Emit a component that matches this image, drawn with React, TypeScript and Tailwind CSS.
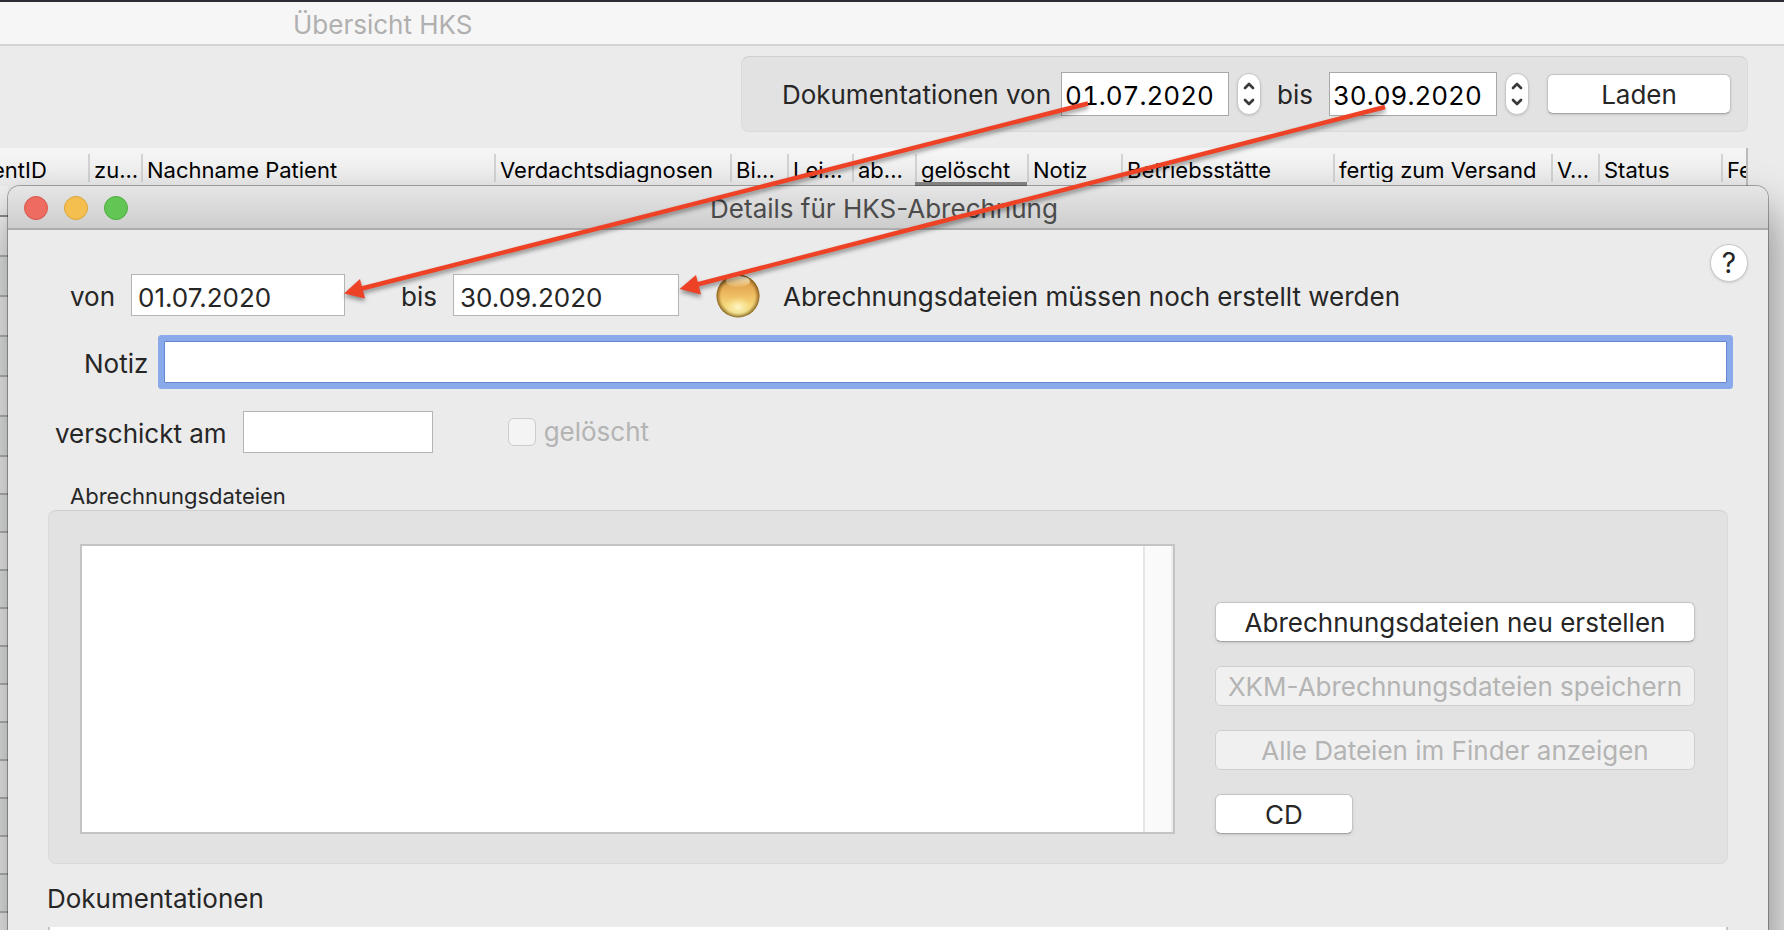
import { ReactNode } from 'react';
import { ChevronDown, ChevronUp } from 'lucide-react';

const columns = [
  { label: 'entID', width: 'w-[88px]' },
  { label: 'zu...', width: 'w-[53px]' },
  { label: 'Nachname Patient', width: 'w-[353px]' },
  { label: 'Verdachtsdiagnosen', width: 'w-[236px]' },
  { label: 'Bi...', width: 'w-[57px]' },
  { label: 'Lei...', width: 'w-[65px]' },
  { label: 'ab...', width: 'w-[63px]' },
  { label: 'gelöscht', width: 'w-[112px]', sorted: true },
  { label: 'Notiz', width: 'w-[94px]' },
  { label: 'Betriebsstätte', width: 'w-[212px]' },
  { label: 'fertig zum Versand', width: 'w-[218px]' },
  { label: 'V...', width: 'w-[47px]' },
  { label: 'Status', width: 'w-[123px]' },
  { label: 'Fe', width: '' },
];

const Stepper = ({ label }: { label: string }) => (
  <div className="flex flex-col w-6 h-[42px] rounded-full bg-white border border-[#c6c6c6] shadow-sm text-[#3a3a3a]">
    <button aria-label={`${label} erhöhen`} className="flex flex-1 items-end justify-center">
      <ChevronUp size={16} strokeWidth={4} />
    </button>
    <button aria-label={`${label} verringern`} className="flex flex-1 items-start justify-center">
      <ChevronDown size={16} strokeWidth={4} />
    </button>
  </div>
);

const PushButton = ({ children, className = '', disabled = false }: {
  children: ReactNode;
  className?: string;
  disabled?: boolean;
}) => (
  <button
    disabled={disabled}
    className={`h-10 pt-[2px] rounded-md border text-[26px] leading-8 whitespace-nowrap ${
      disabled
        ? 'bg-[#f0f0f0] border-[#cfcfcf] text-[#b4b4b4]'
        : 'bg-white border-[#c4c4c4] border-b-[#a6a6a6] text-[#262626] shadow-sm'
    } ${className}`}
  >
    {children}
  </button>
);

const Toolbar = () => (
  <div className="flex justify-end pt-[10px] pr-9 pb-4">
    <div className="flex items-center h-[76px] pl-10 pr-4 rounded-lg border border-[#dadada] border-t-[#cfcfcf] bg-[#e2e2e2]">
      <label htmlFor="filter-von" className="pt-[2px] text-[#262626]">Dokumentationen von</label>
      <input
        id="filter-von"
        defaultValue="01.07.2020"
        className="ml-[10px] mr-2 w-[168px] h-11 px-[3px] pt-[2px] bg-white border border-[#a8a8a8] text-black tabular-nums"
      />
      <Stepper label="von" />
      <label htmlFor="filter-bis" className="mx-4 pt-[2px] text-[#262626]">bis</label>
      <input
        id="filter-bis"
        defaultValue="30.09.2020"
        className="mr-2 w-[168px] h-11 px-[3px] pt-[2px] bg-white border border-[#a8a8a8] text-black tabular-nums"
      />
      <Stepper label="bis" />
      <PushButton className="ml-[18px] w-[184px]">Laden</PushButton>
    </div>
  </div>
);

const TableHeader = () => (
  <div className="mr-9 overflow-hidden border-r-2 border-[#bcbcbc] bg-linear-to-b from-[#f6f6f6] to-[#ebebeb]">
    <table className="w-full table-fixed border-collapse text-[22px] leading-8 text-black">
      <thead>
        <tr>
          {columns.map((column, index) => (
            <th
              key={column.label}
              className={`p-0 pt-[6px] text-left font-normal ${column.width}`}
            >
              <div className={`h-7 overflow-hidden whitespace-nowrap ${index > 0 ? 'border-l-2 border-[#d2d2d2] pl-1' : '-ml-2'}`}>
                {column.label}
              </div>
              <div className={`h-1 ${column.sorted ? 'bg-[#878787]' : ''}`} />
            </th>
          ))}
        </tr>
      </thead>
    </table>
  </div>
);

// Rows of the list that stay visible beside the dialog
const BackgroundRows = () => (
  <div className="flex w-2 flex-col bg-[#f2f2f2]">
    <div className="h-[31px] border-b-2 border-[#8f8f8f]" />
    {Array.from({ length: 6 }, (_, i) => (
      <div key={i} className="h-10 border-b-2 border-[#bdbdbd] even:bg-[#fbfbfb] odd:bg-[#f0f2f2]" />
    ))}
    {Array.from({ length: 12 }, (_, i) => (
      <div key={i} className="h-[38px] border-b-2 border-[#bdbdbd] even:bg-[#fbfbfb] odd:bg-[#f0f2f2]" />
    ))}
    <div className="flex-1 bg-[#fbfbfb]" />
  </div>
);

const StatusLight = () => (
  <svg width="46" height="46" viewBox="0 0 46 46" aria-hidden="true">
    <defs>
      <linearGradient id="light-body" x1="0" y1="0" x2="0" y2="1">
        <stop offset="0" stopColor="#6b4a12" />
        <stop offset="0.12" stopColor="#d69a45" />
        <stop offset="0.4" stopColor="#ecb45c" />
        <stop offset="0.7" stopColor="#f4d577" />
        <stop offset="1" stopColor="#e4da88" />
      </linearGradient>
      <radialGradient id="light-rim">
        <stop offset="0.78" stopColor="#8a5a10" stopOpacity="0" />
        <stop offset="1" stopColor="#6e4a10" stopOpacity="0.8" />
      </radialGradient>
      <radialGradient id="light-glow">
        <stop offset="0" stopColor="#fff8cf" stopOpacity="0.95" />
        <stop offset="1" stopColor="#fff0a0" stopOpacity="0" />
      </radialGradient>
      <linearGradient id="light-shine" x1="0" y1="0" x2="0" y2="1">
        <stop offset="0" stopColor="#fffbe6" />
        <stop offset="1" stopColor="#fbe0a0" stopOpacity="0.2" />
      </linearGradient>
    </defs>
    <circle cx="23" cy="24" r="21.5" fill="url(#light-body)" />
    <circle cx="23" cy="24" r="21.5" fill="url(#light-rim)" />
    <ellipse cx="23" cy="35" rx="14" ry="10" fill="url(#light-glow)" />
    <ellipse cx="23" cy="9.5" rx="12" ry="5.5" fill="url(#light-shine)" />
  </svg>
);

const fieldClass = 'h-[42px] px-[6px] pt-1 bg-white border border-[#b4b4b4] outline-none';

const Dialog = () => (
  <section className="relative z-10 flex min-w-0 flex-1 flex-col rounded-t-xl bg-[#ebebeb] text-[#262626] shadow-[0_0_0_1px_rgba(0,0,0,0.3),0_28px_44px_6px_rgba(0,0,0,0.4)]">
    <header className="grid h-[44px] grid-cols-[1fr_auto_1fr] items-center rounded-t-xl border-b-2 border-[#adadad] bg-linear-to-b from-[#e6e6e6] to-[#cdcdcd] px-4">
      <div className="flex gap-4 pt-[2px]">
        <button aria-label="Schließen" className="size-6 rounded-full border border-[#d9564c] bg-[#ed6b60]" />
        <button aria-label="Minimieren" className="size-6 rounded-full border border-[#dba53a] bg-[#f5bf4f]" />
        <button aria-label="Zoomen" className="size-6 rounded-full border border-[#4dab3f] bg-[#62c655]" />
      </div>
      <h2 className="pt-1 pr-2 text-[#4b4b4b]">Details für HKS-Abrechnung</h2>
    </header>

    <div className="flex flex-1 flex-col pl-10 pr-10">
      <div className="flex items-start pt-[14px]">
        <div className="flex h-[42px] items-center mt-[30px] pl-[22px]">
          <label htmlFor="von" className="pt-1">von</label>
          <input id="von" defaultValue="01.07.2020" className={`ml-4 w-[214px] ${fieldClass}`} />
          <label htmlFor="bis" className="ml-14 pt-1">bis</label>
          <input id="bis" defaultValue="30.09.2020" className={`ml-4 mr-9 w-[226px] ${fieldClass}`} />
          <StatusLight />
          <p className="ml-[22px] pt-1">Abrechnungsdateien müssen noch erstellt werden</p>
        </div>
        <button
          aria-label="Hilfe"
          className="-mr-5 ml-auto size-[38px] shrink-0 rounded-full border border-[#c8c8c8] bg-white text-[28px] shadow-sm"
        >
          ?
        </button>
      </div>

      <div className="mt-[25px] flex items-center pl-9 pr-px">
        <label htmlFor="notiz" className="pt-1">Notiz</label>
        <input
          id="notiz"
          className="ml-4 h-[42px] min-w-0 flex-1 border border-[#6486cf] bg-white px-[6px] outline-none rounded-[1px] ring-[6px] ring-[#8aa9ea]"
        />
      </div>

      <div className="mt-7 flex items-center pl-[7px]">
        <label htmlFor="verschickt" className="pt-1">verschickt am</label>
        <input id="verschickt" className={`ml-4 w-[190px] ${fieldClass}`} />
        <input
          id="geloescht"
          type="checkbox"
          disabled
          className="ml-[75px] size-7 appearance-none rounded-md border border-[#cccccc] bg-[#f4f4f4]"
        />
        <label htmlFor="geloescht" className="ml-2 text-[#b4b4b4]">gelöscht</label>
      </div>

      <h3 className="mt-[29px] pl-[22px] text-[22px] leading-7">Abrechnungsdateien</h3>
      <div className="flex items-end gap-10 rounded-lg border border-[#dadada] border-t-[#cfcfcf] bg-[#e2e2e2] pt-[33px] pr-8 pb-[29px] pl-[31px]">
        <div className="flex h-[290px] min-w-0 flex-1 justify-end border-2 border-[#c4c4c4] bg-white">
          <div className="w-[30px] border-x-2 border-l-[#e6e6e6] border-r-[#ededed] bg-[#fafafa]" />
        </div>
        <div className="flex w-[480px] flex-col gap-6">
          <PushButton>Abrechnungsdateien neu erstellen</PushButton>
          <PushButton disabled>XKM-Abrechnungsdateien speichern</PushButton>
          <PushButton disabled>Alle Dateien im Finder anzeigen</PushButton>
          <PushButton className="w-[138px]">CD</PushButton>
        </div>
      </div>

      <h3 className="mt-[19px] -ml-px">Dokumentationen</h3>
      <div className="mt-3 flex-1 border-x-2 border-[#c4c4c4] bg-white" />
    </div>
  </section>
);

const Arrows = () => (
  <svg
    className="pointer-events-none absolute top-0 left-0 z-20 drop-shadow-[0_3px_2px_rgba(0,0,0,0.4)]"
    width="1784"
    height="930"
    viewBox="0 0 1784 930"
    aria-hidden="true"
  >
    <g stroke="#ee4226" strokeWidth="4.5" fill="none">
      <path d="M1088 103.500 L360 289" />
      <path d="M1385 107 L697 284.500" />
    </g>
    <g fill="#ee4226">
      <path d="M344 293.500 L360 279 L365 298.500 Z" />
      <path d="M679.500 289 L696 275 L701 294.500 Z" />
    </g>
  </svg>
);

const App = () => {
  return (
    <div className="relative flex min-h-screen flex-col overflow-hidden bg-[#ebebeb] font-['Inter','Liberation_Sans',sans-serif] text-[26px] leading-8">
      <header className="flex h-[46px] items-center border-t-2 border-b-2 border-t-[#2c2a35] border-b-[#d4d4d4] bg-[#f6f6f6] pl-[293px]">
        <h1 className="pt-1 text-[#b0b0b0]">Übersicht HKS</h1>
      </header>
      <Toolbar />
      <TableHeader />
      <main className="flex flex-1">
        <BackgroundRows />
        <Dialog />
        <div className="w-4" />
      </main>
      <Arrows />
    </div>
  );
};

export default App;
